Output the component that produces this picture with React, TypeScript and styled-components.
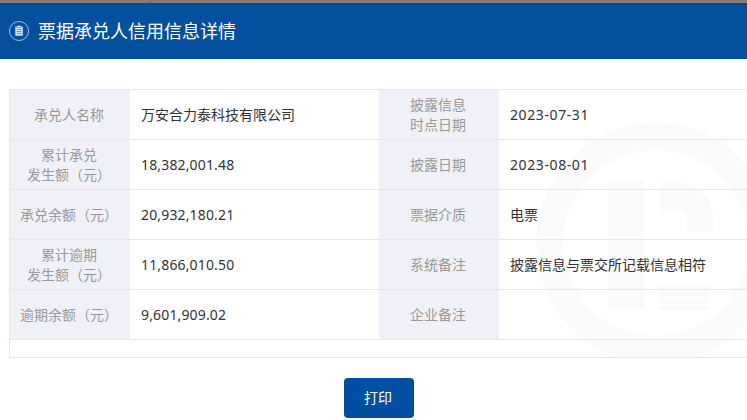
import React from 'react';
import styled, { createGlobalStyle } from 'styled-components';

const GlobalStyle = createGlobalStyle`
  html, body {
    margin: 0;
    padding: 0;
    height: 420px;
    overflow: hidden;
    background: #fff;
    font-family: "Noto Sans", "Noto Sans CJK SC", sans-serif;
  }
`;

const Page = styled.div`
  width: 747px;
  height: 420px;
  overflow: hidden;
`;

const BackdropStrip = styled.div`
  height: 3px;
  background: #7f7f7f;
  overflow: hidden;
  display: flex;
  align-items: flex-end;
`;

const BackdropDivider = styled.div`
  width: 1px;
  height: 3px;
  margin-left: 150px;
  background: #6c6c6c;
  flex: none;
`;

const BackdropText = styled.div`
  margin-left: 44px;
  font-size: 14px;
  line-height: 20px;
  height: 20px;
  flex: none;
  color: #222;
  white-space: nowrap;
`;

const Header = styled.div`
  height: 56px;
  background: #04509f;
  display: flex;
  align-items: center;
  padding-left: 9px;
  gap: 9px;
`;

const Title = styled.h1`
  margin: 0;
  font-size: 18px;
  font-weight: 400;
  line-height: 56px;
  color: #fff;
`;

const DetailTable = styled.div`
  position: relative;
  overflow: hidden;
  width: 770px;
  margin: 30px 0 0 9px;
  border: 1px solid #e6e6f0;
`;

const Watermark = styled.svg`
  position: absolute;
  left: 526px;
  top: 33px;
`;

const Grid = styled.div`
  position: relative;
  display: grid;
  grid-template-columns: 120px 249px 120px 1fr;
  grid-auto-rows: 50px;
`;

const LabelCell = styled.div`
  display: flex;
  align-items: center;
  justify-content: center;
  box-sizing: border-box;
  padding-right: 2px;
  border-bottom: 1px solid #e6e6f0;
  background: #f0f1f6;
  color: #999;
  font-size: 14px;
  line-height: 20px;
  text-align: center;
`;

const ValueCell = styled.div<{ $tracking?: number }>`
  display: flex;
  align-items: center;
  box-sizing: border-box;
  padding-left: 11px;
  border-bottom: 1px solid #e6e6f0;
  color: #333;
  font-size: 14px;
  line-height: 20px;
  letter-spacing: ${(p) => p.$tracking ?? 0}px;
`;

const TableFooter = styled.div`
  position: relative;
  height: 17px;
`;

const Actions = styled.div`
  display: flex;
  justify-content: center;
  margin-top: 20px;
  padding-left: 11px;
`;

const PrintButton = styled.button`
  width: 70px;
  height: 40px;
  padding: 0 2px 2px 0;
  border: 0;
  border-radius: 4px;
  background: #034ea2;
  color: #fff;
  font-family: inherit;
  font-size: 14px;
`;

const MONEY = 0.15;
const DATE = 0.6;

const rows: [string, string, number, string, string, number][] = [
  ['承兑人名称', '万安合力泰科技有限公司', 0, '披露信息\n时点日期', '2023-07-31', DATE],
  ['累计承兑\n发生额（元）', '18,382,001.48', MONEY, '披露日期', '2023-08-01', DATE],
  ['承兑余额（元）', '20,932,180.21', MONEY, '票据介质', '电票', 0],
  ['累计逾期\n发生额（元）', '11,866,010.50', MONEY, '系统备注', '披露信息与票交所记载信息相符', 0],
  ['逾期余额（元）', '9,601,909.02', MONEY, '企业备注', '', 0],
];

const Label = ({ text }: { text: string }) => (
  <LabelCell>
    <span>
      {text.split('\n').map((line, i) => (
        <React.Fragment key={line}>
          {i > 0 && <br />}
          {line}
        </React.Fragment>
      ))}
    </span>
  </LabelCell>
);

const ClipboardIcon = () => (
  <svg width="20" height="20" viewBox="0 0 20 20" fill="none">
    <circle cx="10" cy="10" r="9.5" stroke="#c9d9ec" strokeWidth="0.8" />
    <path d="M6.3 5.5h7.5v9.2H6.3z" fill="#dbe6f3" />
    <path d="M8 4.5h4v2H8z" fill="#fff" stroke="#04509f" strokeWidth="0.5" />
    <path d="M7.6 8.6h4.9M7.6 10.6h4.9M7.6 12.6h4.9" stroke="#3f78b6" strokeWidth="0.8" />
  </svg>
);

const LogoMark = () => (
  <Watermark width="240" height="240" viewBox="0 0 240 240" fill="#fafafa">
    <path
      fillRule="evenodd"
      d="M120 0a120 120 0 1 0 0 240a120 120 0 1 0 0-240zM120 27a93 93 0 1 1 0 186a93 93 0 1 1 0-186z"
    />
    <rect x="72" y="58" width="36" height="128" />
    <path d="M124 60h20a33 33 0 0 1 33 33v16h-26v-14q0-8-8-8h-19z" />
    <rect x="123" y="162" width="50" height="5" />
    <rect x="123" y="169" width="50" height="5" />
    <rect x="123" y="176" width="50" height="5" />
    <rect x="123" y="183" width="50" height="5" />
  </Watermark>
);

const App = () => (
  <Page>
    <GlobalStyle />
    <BackdropStrip>
      <BackdropDivider />
      <BackdropText>社会信用代码</BackdropText>
    </BackdropStrip>
    <Header>
      <ClipboardIcon />
      <Title>票据承兑人信用信息详情</Title>
    </Header>
    <DetailTable>
      <LogoMark />
      <Grid>
        {rows.map((row) => (
          <React.Fragment key={row[0]}>
            <Label text={row[0]} />
            <ValueCell $tracking={row[2]}>{row[1]}</ValueCell>
            <Label text={row[3]} />
            <ValueCell $tracking={row[5]}>{row[4]}</ValueCell>
          </React.Fragment>
        ))}
      </Grid>
      <TableFooter />
    </DetailTable>
    <Actions>
      <PrintButton>打印</PrintButton>
    </Actions>
  </Page>
);

export default App;
